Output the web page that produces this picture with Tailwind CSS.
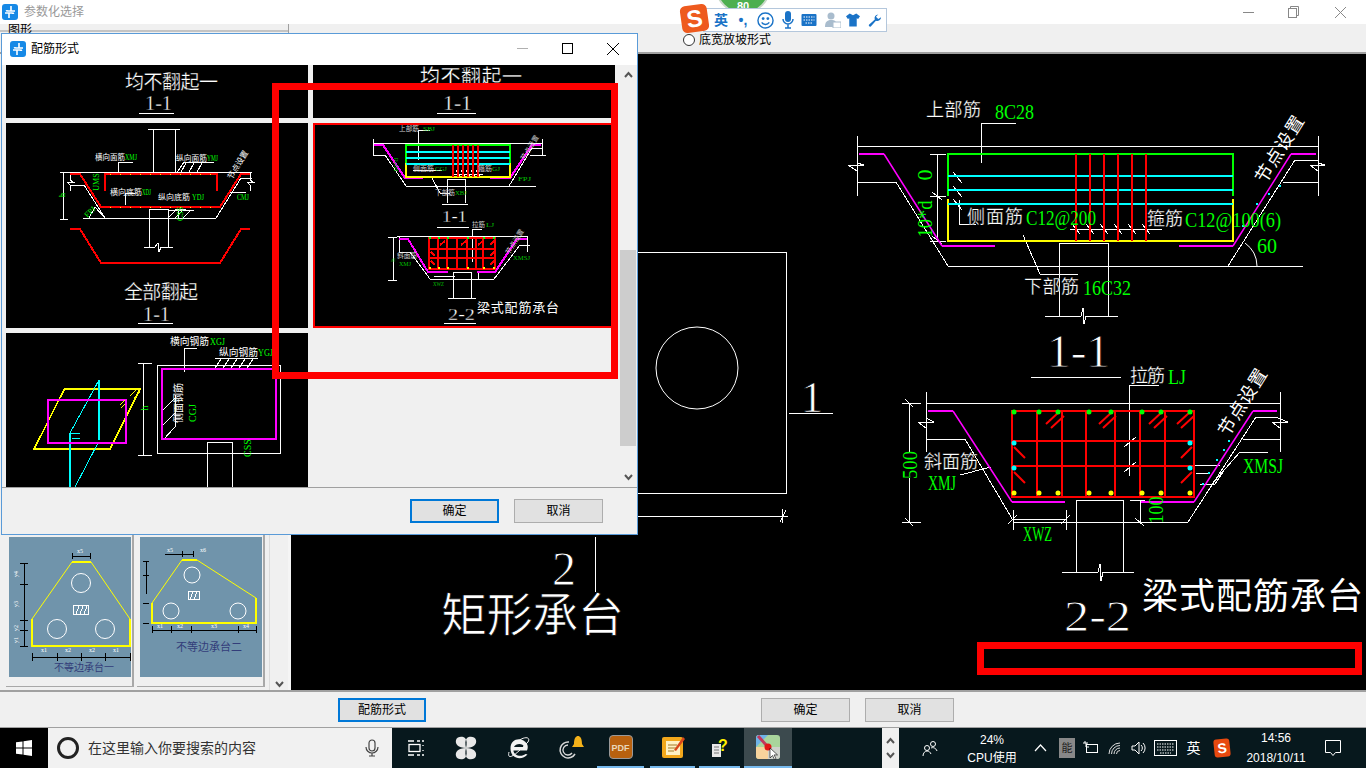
<!DOCTYPE html>
<html lang="zh">
<head>
<meta charset="utf-8">
<title>参数化选择</title>
<script src="https://cdn.jsdelivr.net/npm/@tailwindcss/browser@4"></script>
</head>
<body class="relative w-[1366px] h-[768px] overflow-hidden flex flex-col bg-[#f0f0f0] text-black text-xs [font-family:'Liberation_Sans','Noto_Sans_CJK_SC',sans-serif]">

<!-- main window title -->
<header class="h-6 bg-white flex items-center shrink-0">
  <svg class="ml-[2px] mr-[6px]" width="16" height="16" viewBox="0 0 16 16"><rect width="16" height="16" rx="3" fill="#1689e6"/><path d="M9 2v5h4M7 14V9H3M9 7H6a2 2 0 0 0-2 0M7 9h3a2 2 0 0 0 2 0" fill="none" stroke="#fff" stroke-width="1.6"/></svg>
  <span class="text-[#999999]">参数化选择</span>
  <div class="ml-auto flex items-center text-[#888888]">
    <span class="block w-[11px] h-px bg-[#888888]"></span>
    <svg class="ml-[34px]" width="11" height="12" viewBox="0 0 11 12" fill="none" stroke="#888"><rect x="0.5" y="2.5" width="8" height="9"/><path d="M2.5 2.5v-2h8v9h-2"/></svg>
    <svg class="ml-[36px] mr-[20px]" width="11" height="11" viewBox="0 0 11 11" stroke="#888"><path d="M0 0l11 11M11 0L0 11"/></svg>
  </div>
</header>

<!-- toolbar -->
<div class="h-[30px] shrink-0 flex border-b-2 border-[#a0a0a0] bg-[#f0f0f0]">
  <div class="w-[289px] h-full border-r border-[#a0a0a0]">
    <div class="h-[8px] border-b-2 border-[#c4c4c4] pl-2 leading-[13px]">图形</div>
  </div>
  <label class="ml-[394px] mt-[10px] flex items-center h-3 gap-1">
    <span class="block w-3 h-3 rounded-full border border-[#333333] bg-white"></span>
    <span class="text-xs">底宽放坡形式</span>
  </label>
</div>

<!-- main -->
<main class="flex-1 flex min-h-0">
  <aside class="w-[291px] shrink-0 flex items-end bg-[#f0f0f0] border-r-[3px] border-[#f5f5f5]">
    <div class="flex pl-[6px] pb-[3px] gap-[3px]">
      <div class="w-[128px] h-[200px] border-r-2 border-b border-[#a8a8a8] pl-[3px] pr-[1px] pb-[9px] flex items-end">
        <svg class="block" width="122" height="140" viewBox="9 537 122 140" shape-rendering="crispEdges">
          <rect x="9" y="537" width="122" height="140" fill="#7094ab"/>
          <path d="M32 619L72 562M91 562L130 619" fill="none" stroke="#ffff00" shape-rendering="auto"/>
          <path d="M72 562H91M130 619V646H32V619" fill="none" stroke="#ffff00" stroke-width="1.500"/>
          <g fill="none" stroke="#fff" shape-rendering="auto"><circle cx="81" cy="583" r="9.500"/><circle cx="57" cy="629" r="9.500"/><circle cx="105" cy="629" r="9.500"/></g>
          <g fill="none" stroke="#fff"><rect x="73.500" y="605.500" width="15" height="9"/><path d="M76 614l3-8M80 614l3-8M84 614l3-8"/></g>
          <path d="M32 657H130M32 653v8M57 653v8M81 653v8M105 653v8M130 653v8M72 556H90M72 553v6M90 553v6M24 563v83M20 563h8M20 584h8M20 620h8M20 630h8M20 646h8" stroke="#000" fill="none"/>
          <g fill="#fff" font-size="6" font-family="'Liberation Serif',serif" text-anchor="middle"><text x="44" y="652">x1</text><text x="68" y="652">x2</text><text x="92" y="652">x2</text><text x="116" y="652">x1</text><text x="80" y="553">x5</text></g>
          <g fill="#fff" font-size="6" font-family="'Liberation Serif',serif" text-anchor="middle"><text transform="translate(18 574) rotate(-90)">y4</text><text transform="translate(18 604) rotate(-90)">y3</text><text transform="translate(18 628) rotate(-90)">y2</text><text transform="translate(18 640) rotate(-90)">y1</text></g>
          <text x="84" y="671" text-anchor="middle" font-size="10" fill="#333d7a">不等边承台一</text>
        </svg>
      </div>
      <div class="w-[128px] h-[200px] border-r-2 border-b border-[#a8a8a8] pl-[3px] pr-[1px] pb-[9px] flex items-end">
        <svg class="block" width="122" height="140" viewBox="140 537 122 140" shape-rendering="crispEdges">
          <rect x="140" y="537" width="122" height="140" fill="#7094ab"/>
          <path d="M152 603L182 560M197 560L256 598" fill="none" stroke="#ffff00" shape-rendering="auto"/>
          <path d="M182 560H197M256 598V623H152V603" fill="none" stroke="#ffff00" stroke-width="1.500"/>
          <g fill="none" stroke="#fff" shape-rendering="auto"><circle cx="192" cy="575" r="8"/><circle cx="171" cy="611" r="8"/><circle cx="238" cy="611" r="8"/></g>
          <g fill="none" stroke="#fff"><rect x="188.500" y="591.500" width="11" height="8"/><path d="M190 599l3-7M194 599l3-7"/></g>
          <path d="M152 630H256M152 626v7M171 626v7M191 626v7M238 626v7M256 626v7M165 554H194M182 551v6M193 551v6M146 561v33M143 561h6M143 575h6M143 603h6M143 623h6" stroke="#000" fill="none"/>
          <g fill="#fff" font-size="6" font-family="'Liberation Serif',serif" text-anchor="middle"><text x="160" y="628">x1</text><text x="180" y="628">x2</text><text x="214" y="628">x3</text><text x="246" y="628">x4</text><text x="170" y="552">x5</text><text x="203" y="552">x6</text></g>
          <text x="209" y="651" text-anchor="middle" font-size="11" fill="#333d7a">不等边承台二</text>
        </svg>
      </div>
    </div>
    <div class="ml-auto w-[19px] h-full flex items-end justify-center pb-[2px] border-l border-[#dcdcdc]">
      <svg width="9" height="7" viewBox="0 0 9 7" fill="none" stroke="#555" stroke-width="2"><path d="M1 1l3.500 4 3.500-4"/></svg>
    </div>
  </aside>

  <div class="flex-1 bg-black min-w-0">
    <svg class="block" width="1075" height="636" viewBox="291 54 1075 636" shape-rendering="crispEdges" font-family="'Liberation Serif','Noto Sans CJK SC',serif">
      <!-- rectangular pile cap -->
      <g fill="none" stroke="#fff">
        <path d="M600 252H786V493H600M600 516H788M786 510l-6 12M782 509v14M595 537V592M789 413H833"/>
        <circle cx="697" cy="368" r="41" shape-rendering="auto"/>
      </g>
      <g fill="#fff" stroke="#000">
        <text x="812" y="397" text-anchor="middle" font-size="44" stroke-width=".7" dominant-baseline="central">1</text>
        <text x="564" y="568" text-anchor="middle" font-size="48" stroke-width=".8" dominant-baseline="central">2</text>
        <text x="441" y="615" font-size="46" textLength="183" stroke-width=".7" dominant-baseline="central">矩形承台</text>
      </g>

      <!-- section 1-1 -->
      <g fill="none" stroke="#fff">
        <path d="M857 146H1318M857 136V196M1318 136V196"/>
        <path d="M857 150V163L864 165H848L857 171V182H896L948 266H1303"/>
        <path d="M1318 150V160H1295L1228 266M1318 163L1325 165H1310L1318 171V182H1283"/>
        <path d="M981 163V123H1016M959 200V224H976M1023 235L1040 274H1078"/>
        <path d="M1059 316V243H1108V316M1045 316H1081L1083 308L1084 324L1086 316H1118"/>
        <path d="M937 154V241M930 154H946M930 196H946M930 241H946M932 192l10 8M932 236l10 8"/>
        <path d="M953 172l9 11M953 186l9 11M953 199l9 11"/>
        <path d="M1070 229H1162M1072 224l8 10M1086 224l8 10M1100 224l8 10M1114 224l8 10M1128 224l8 10M1142 224l8 10"/>
        <path d="M1257 266A29 29 0 0 0 1245 243" shape-rendering="auto"/>
        <path d="M1031 377H1121"/>
      </g>
      <path d="M859 154H884M942 246H995M1179 246H1233M1291 154H1316" fill="none" stroke="#ff00ff" stroke-width="2"/>
      <path d="M884 154L942 246M1233 246L1291 154" fill="none" stroke="#ff00ff" stroke-width="1.500" shape-rendering="auto"/>
      <path d="M948 196V154H1233V196" fill="none" stroke="#00ff00" stroke-width="2"/>
      <path d="M948 199V241H1233V199" fill="none" stroke="#ffff00" stroke-width="2"/>
      <path d="M948 176H1233M948 190H1233M948 204H1233" stroke="#00ffff" stroke-width="2"/>
      <path d="M1076 154V241M1090 154V241M1104 154V241M1118 154V241M1132 154V241M1146 154V241" stroke="#ff0000" stroke-width="2"/>
      <path d="M1242 225h2v2h-2zM1256 203h2v2h-2zM1268 193h2v2h-2zM1279 185h2v2h-2z" fill="#00ffff"/>
      <g fill="#fff" font-size="18">
        <text x="926" y="110" textLength="55" stroke="#000" stroke-width=".25" dominant-baseline="central">上部筋</text>
        <text x="967" y="217" textLength="56" stroke="#000" stroke-width=".25" dominant-baseline="central">侧面筋</text>
        <text x="1147" y="219" textLength="36" stroke="#000" stroke-width=".25" dominant-baseline="central">箍筋</text>
        <text x="1024" y="287" textLength="55" stroke="#000" stroke-width=".25" dominant-baseline="central">下部筋</text>
        <text transform="translate(1280 149) rotate(-58)" text-anchor="middle" dominant-baseline="central" letter-spacing="1">节点设置</text>
      </g>
      <g fill="#00ff00" font-size="22">
        <text x="995" y="111" textLength="39" lengthAdjust="spacingAndGlyphs" dominant-baseline="central">8C28</text>
        <text x="1026" y="217" textLength="70" lengthAdjust="spacingAndGlyphs" dominant-baseline="central">C12@200</text>
        <text x="1185" y="219" textLength="96" lengthAdjust="spacingAndGlyphs" dominant-baseline="central">C12@100(6)</text>
        <text x="1257" y="245" textLength="20" lengthAdjust="spacingAndGlyphs" dominant-baseline="central">60</text>
        <text x="1083" y="287" textLength="48" lengthAdjust="spacingAndGlyphs" dominant-baseline="central">16C32</text>
        <text transform="translate(924 175) rotate(-90)" text-anchor="middle" dominant-baseline="central">0</text>
        <text transform="translate(924 219) rotate(-90)" text-anchor="middle" textLength="37" lengthAdjust="spacingAndGlyphs" dominant-baseline="central">10*d</text>
      </g>
      <text x="1047" y="351" font-size="46" fill="#fff" stroke="#000" stroke-width=".8" textLength="63" lengthAdjust="spacingAndGlyphs" dominant-baseline="central">1-1</text>

      <!-- section 2-2 -->
      <g fill="none" stroke="#fff">
        <path d="M926 403H1280M926 392V452M1280 392V452"/>
        <path d="M926 403V418L934 422H918L926 428V439H965L1014 522H1188L1256 417H1276L1280 419M1243 439H1280M1280 419L1288 422H1272L1280 428"/>
        <path d="M1129 476V385H1159M1124 447l12-10M1124 472l12-10M960 475L991 467"/>
        <path d="M902 403H921M902 522H921M909 403V452M909 478V522M905 518l8 8M905 399l8 8"/>
        <path d="M1076 572V500H1123V572M1062 572H1098L1100 564L1101 581L1103 572H1134"/>
        <path d="M1012 519H1066M1013 510V530M1066 510V530M1008 524l9-9M1061 524l9-9"/>
        <path d="M1130 500H1145M1140 500V522M1135 518l9 8"/>
        <path d="M1203 484H1212L1240 452H1268M1196 473H1210M1188 465H1220M1215 484l8-12M1200 484H1215"/>
      </g>
      <path d="M928 411H953M1012 502H1065M1141 502H1194M1253 411H1277" fill="none" stroke="#ff00ff" stroke-width="2"/>
      <path d="M953 411L1012 502M1194 502L1253 411" fill="none" stroke="#ff00ff" stroke-width="1.500" shape-rendering="auto"/>
      <g stroke="#ff0000" fill="none" stroke-width="2">
        <rect x="1012" y="411" width="182" height="86"/>
        <path d="M1012 441H1194M1012 466H1194M1037 411V497M1062 411V497M1086 411V497M1115 411V497M1140 411V497M1165 411V497"/>
        <path shape-rendering="auto" d="M1046 424L1059 412M1051 428L1064 416M1099 424L1112 412M1103 428L1116 416M1149 424L1162 412M1154 428L1167 416M1177 424L1190 412M1181 428L1194 416M1014 447L1025 458M1014 472L1025 483M1192 447L1181 458M1192 472L1181 483"/>
      </g>
      <g fill="none" stroke-width="5" stroke-linecap="round" shape-rendering="auto">
        <path d="M1014 412h.01M1039 412h.01M1058 412h.01M1089 412h.01M1111 412h.01M1142 412h.01M1161 412h.01M1190 412h.01" stroke="#00ff00"/>
        <path d="M1014 493h.01M1039 493h.01M1058 493h.01M1089 493h.01M1111 493h.01M1142 493h.01M1161 493h.01M1190 493h.01" stroke="#ffff00"/>
        <path d="M1014 443h.01M1014 468h.01M1190 443h.01M1190 468h.01" stroke="#00ffff"/>
      </g>
      <path d="M1228 440h2v2h-2zM1223 449h2v2h-2zM1216 459h2v2h-2zM1208 472h2v2h-2zM1202 483h2v2h-2z" fill="#00ffff"/>
      <g fill="#fff" font-size="18">
        <text x="1130" y="376" textLength="35" stroke="#000" stroke-width=".25" dominant-baseline="central">拉筋</text>
        <text x="924" y="462" textLength="54" stroke="#000" stroke-width=".25" dominant-baseline="central">斜面筋</text>
        <text transform="translate(1243 402) rotate(-58)" text-anchor="middle" dominant-baseline="central" letter-spacing="1">节点设置</text>
      </g>
      <g fill="#00ff00" font-size="22">
        <text x="1168" y="376" textLength="18" lengthAdjust="spacingAndGlyphs" dominant-baseline="central">LJ</text>
        <text x="928" y="482" textLength="28" lengthAdjust="spacingAndGlyphs" dominant-baseline="central">XMJ</text>
        <text x="1243" y="465" textLength="40" lengthAdjust="spacingAndGlyphs" dominant-baseline="central">XMSJ</text>
        <text x="1023" y="533" textLength="29" lengthAdjust="spacingAndGlyphs" dominant-baseline="central">XWZ</text>
        <text transform="translate(909 465) rotate(-90)" text-anchor="middle" textLength="28" lengthAdjust="spacingAndGlyphs" dominant-baseline="central">500</text>
        <text transform="translate(1155 510) rotate(-90)" text-anchor="middle" textLength="27" lengthAdjust="spacingAndGlyphs" dominant-baseline="central">100</text>
      </g>
      <text x="1064" y="616" font-size="44" fill="#fff" stroke="#000" stroke-width=".8" textLength="67" lengthAdjust="spacingAndGlyphs" dominant-baseline="central">2-2</text>
      <text x="1142" y="597" font-size="36" fill="#fff" textLength="221" dominant-baseline="central">梁式配筋承台</text>
    </svg>
  </div>
</main>

<!-- bottom buttons -->
<footer class="h-[38px] shrink-0 border-t-2 border-b border-t-[#a0a0a0] border-b-[#a0a0a0] bg-[#f0f0f0] flex items-center pl-[338px]">
  <button class="w-[88px] h-6 border-2 border-[#0078d7] bg-[#e1e1e1] text-xs">配筋形式</button>
  <button class="ml-[335px] w-[89px] h-6 border border-[#adadad] bg-[#e1e1e1] text-xs">确定</button>
  <button class="ml-[15px] w-[89px] h-6 border border-[#adadad] bg-[#e1e1e1] text-xs">取消</button>
</footer>

<!-- taskbar -->
<nav class="h-10 shrink-0 flex bg-[#07181d] text-white text-xs">
  <div class="w-12 bg-black flex items-center justify-center">
    <svg width="16" height="16" viewBox="0 0 16 16" fill="#fff"><path d="M0 2.300L6.500 1.400V7.500H0ZM7.500 1.300L16 0V7.500H7.500ZM0 8.500H6.500V14.600L0 13.700ZM7.500 8.500H16V16L7.500 14.700Z"/></svg>
  </div>
  <div class="w-[344px] bg-[#f1f1f1] flex items-center text-[#333333] text-sm">
    <span class="ml-[9px] block w-[22px] h-[22px] rounded-full border-[3px] border-[#222222]"></span>
    <span class="ml-[9px]">在这里输入你要搜索的内容</span>
    <svg class="ml-auto mr-[13px]" width="14" height="18" viewBox="0 0 14 18" fill="none" stroke="#444" stroke-width="1.200"><rect x="4" y="1" width="6" height="11" rx="3"/><path d="M1 8a6 6 0 0 0 12 0M7 14v3M4 17h6"/></svg>
  </div>
  <div class="w-12 flex items-center justify-center">
    <svg width="16" height="16" viewBox="0 0 16 16" fill="none" stroke="#fff" stroke-width="1.300"><path d="M0 1h6M0 15h6M9 1h3M9 15h3M14 1h2M14 15h2"/><rect x="1" y="4.500" width="11" height="7"/><path d="M15 5v1M15 10v1" /></svg>
  </div>
  <div class="w-[52px] flex items-center justify-center">
    <svg width="22" height="24" viewBox="0 0 22 24" fill="#e8e8e8"><path d="M11 12C3 12 0 8 1 4S8 0 10 2s2 6 1 10ZM11 12c8 0 11-4 10-8S14 0 12 2s-2 6-1 10ZM11 12c-8 0-11 4-10 8s7 4 9 2 2-6 1-10ZM11 12c8 0 11 4 10 8s-7 4-9 2-2-6-1-10Z"/></svg>
  </div>
  <div class="w-[53px] flex items-center justify-center">
    <svg width="24" height="24" viewBox="0 0 24 24" fill="none"><path d="M20 14.500H6.500c0 5 8 7 12 3.500l2 .5c-5 6-17 5-17-6S16 1 20 8c1 2 1 4 0 6.500ZM7 11h10c-.5-4-8.500-4-10 0Z" fill="#f2f2f2"/><path d="M2 16C0 24 6 22 21 6c3-5-3-6-10-1" stroke="#f2f2f2"/></svg>
  </div>
  <div class="w-[52px] flex items-center justify-center">
    <svg width="28" height="24" viewBox="0 0 28 24" fill="none"><path d="M12 6a8 8 0 1 0 6 12" stroke="#d8d8d8" stroke-width="1.500"/><path d="M11 9a5 5 0 1 0 4 8" stroke="#d8d8d8" stroke-width="1.300"/><path d="M17 8c0-6 2-8 4-8s4 2 4 8l2 3H15Z" fill="#f5b21a"/></svg>
  </div>
  <div class="w-[47px] flex items-center justify-center border-b-2 border-[#76b9ed]">
    <span class="block w-6 h-6 rounded-sm bg-[#b8610f] border border-[#999999] text-[#e9d7b8] text-[9px] font-bold text-center leading-6">PDF</span>
  </div>
  <div class="ml-[6px] w-[45px] flex items-center justify-center border-b-2 border-[#76b9ed]">
    <svg width="24" height="24" viewBox="0 0 24 24"><rect x="1" y="2" width="21" height="21" rx="2" fill="#f2a81c"/><rect x="5" y="6" width="14" height="14" fill="#fff2c4"/><path d="M7 10h9M7 13h9M7 16h6" stroke="#a37a2a"/><path d="M13 15L22 2l2 2-9 12Z" fill="#d9471b"/></svg>
  </div>
  <div class="ml-[4px] w-[41px] flex items-center justify-center border-b-2 border-[#76b9ed]">
    <svg width="18" height="24" viewBox="0 0 18 24"><rect x="1" y="9" width="9" height="13" fill="#e8e8e8"/><path d="M3 12h5M3 15h5M3 18h5" stroke="#777"/><text x="7" y="16" font-size="16" font-weight="700" fill="#ffee00" font-family="'Liberation Sans',sans-serif">?</text></svg>
  </div>
  <div class="ml-[4px] w-12 flex items-center justify-center bg-[#3c4a4e] border-b-2 border-[#76b9ed]">
    <svg width="24" height="26" viewBox="0 0 24 26"><rect y="1" width="24" height="24" rx="3" fill="#a9d59c"/><path d="M0 13V4a3 3 0 0 1 3-3h9Z" fill="#6fb4e8"/><path d="M0 13h12V25H3a3 3 0 0 1-3-3Z" fill="#f7d39c"/><path d="M12 13h12v9a3 3 0 0 1-3 3h-9Z" fill="#cfd2cc"/><path d="M2 2l10 11" stroke="#c2385c" stroke-width="3"/><circle cx="12" cy="13" r="3.500" fill="#e01616"/><path d="M14 14v10l2.500-2.500 2 4 1.500-.8-2-3.800h3.500Z" fill="#fff" stroke="#000" stroke-width=".6"/></svg>
  </div>
  <div class="ml-[90px] w-[17px] bg-[#f0f0f0] flex flex-col items-center justify-around py-[5px]">
    <svg width="9" height="7" viewBox="0 0 9 7" fill="none" stroke="#555" stroke-width="2"><path d="M1 6l3.500-4 3.500 4"/></svg>
    <svg width="9" height="7" viewBox="0 0 9 7" fill="none" stroke="#555" stroke-width="2"><path d="M1 1l3.500 4 3.500-4"/></svg>
  </div>
  <div class="w-[61px] flex items-center justify-center">
    <svg width="16" height="16" viewBox="0 0 16 16" fill="none" stroke="#fff"><circle cx="5" cy="8" r="2.500"/><path d="M1 16c0-3 2-5 4-5s3 1 4 3"/><circle cx="11" cy="4" r="2.500"/><path d="M9 8c2-1 5 0 6 3"/></svg>
  </div>
  <div class="w-16 flex flex-col items-center justify-center leading-[18px] pt-[1px]">
    <span>24%</span><span>CPU使用</span>
  </div>
  <div class="w-8 flex items-center justify-center">
    <svg width="13" height="8" viewBox="0 0 13 8" fill="none" stroke="#fff" stroke-width="1.200"><path d="M1 7l5.500-6 5.500 6"/></svg>
  </div>
  <div class="w-[22px] flex items-center justify-center">
    <span class="block w-4 h-5 bg-[#888888] text-[#222222] text-[11px] text-center leading-5">能</span>
  </div>
  <div class="w-[25px] flex items-center justify-center">
    <svg width="15" height="14" viewBox="0 0 15 14" fill="none" stroke="#fff"><rect x="3.500" y="3.500" width="11" height="8"/><path d="M0 2h5M2 0v2M3 2v4M4 6h2" /></svg>
  </div>
  <div class="w-6 flex items-center justify-center">
    <svg width="14" height="13" viewBox="0 0 14 13" fill="none" stroke="#ddd"><path d="M1 12A11 11 0 0 1 12 1M3.500 12A8.500 8.500 0 0 1 12 3.500M6 12A6 6 0 0 1 12 6M8.500 12A3.500 3.500 0 0 1 12 8.500"/></svg>
  </div>
  <div class="w-[22px] flex items-center justify-center">
    <svg width="15" height="14" viewBox="0 0 15 14" fill="none" stroke="#fff"><path d="M1 5h3l4-4v12l-4-4H1Z"/><path d="M10 4a4 4 0 0 1 0 6M12 2a7 7 0 0 1 0 10"/></svg>
  </div>
  <div class="w-8 flex items-center justify-center">
    <svg width="23" height="16" viewBox="0 0 23 16" fill="none" stroke="#fff"><rect x=".5" y=".5" width="22" height="15"/><path d="M3 4h17M3 7h17M3 10h17M6 13h11" stroke-dasharray="1.500 1"/></svg>
  </div>
  <div class="w-[25px] flex items-center justify-center text-sm">英</div>
  <div class="w-8 flex items-center justify-center">
    <span class="block w-4 h-[18px] bg-[#e8490f] rounded-[3px] rotate-[-6deg] text-white font-bold text-sm text-center leading-[18px]">S</span>
  </div>
  <div class="w-[76px] flex flex-col items-center justify-center leading-[20px]">
    <span>14:56</span><span>2018/10/11</span>
  </div>
  <div class="w-[38px] flex items-center justify-center">
    <svg width="16" height="17" viewBox="0 0 16 17" fill="none" stroke="#fff"><path d="M.5.500h15v12h-5l-2.500 3-2.500-3h-5Z"/></svg>
  </div>
</nav>

<!-- dialog window -->
<section class="absolute left-[1px] top-[33px] w-[637px] h-[502px] border border-[#5a9bd8] bg-[#f0f0f0] flex flex-col">
  <div class="h-[31px] shrink-0 bg-white flex items-center pb-[2px]">
    <svg class="ml-2 mr-[5px]" width="16" height="16" viewBox="0 0 16 16"><rect width="16" height="16" rx="3" fill="#1689e6"/><path d="M9 2v5h4M7 14V9H3M9 7H6a2 2 0 0 0-2 0M7 9h3a2 2 0 0 0 2 0" fill="none" stroke="#fff" stroke-width="1.600"/></svg>
    <span>配筋形式</span>
    <span class="ml-[438px] block w-[11px] h-px bg-[#b0b0b0]"></span>
    <span class="ml-[34px] block w-[11px] h-[11px] border border-black"></span>
    <svg class="ml-[34px]" width="12" height="12" viewBox="0 0 12 12" stroke="#000"><path d="M0 0l12 12M12 0L0 12"/></svg>
  </div>
  <div class="h-[422px] shrink-0 flex pl-1">
    <div class="grid grid-cols-[302px_302px] grid-rows-[53px_205px_154px] gap-[5px] overflow-hidden">
      <div class="bg-black overflow-hidden">
        <svg class="block" width="302" height="53" viewBox="6 65 302 53" font-family="'Liberation Serif','Noto Sans CJK SC',serif" shape-rendering="crispEdges">
          <text x="125" y="82" font-size="19" fill="#fff" stroke="#000" stroke-width=".25" textLength="93" dominant-baseline="central">均不翻起一</text>
          <text x="145" y="102" font-size="22" fill="#fff" stroke="#000" stroke-width=".4" textLength="27" lengthAdjust="spacingAndGlyphs" dominant-baseline="central">1-1</text>
          <path d="M139 113H174" stroke="#fff"/>
        </svg>
      </div>
      <div class="bg-black overflow-hidden">
        <svg class="block" width="302" height="53" viewBox="313 65 302 53" font-family="'Liberation Serif','Noto Sans CJK SC',serif" shape-rendering="crispEdges">
          <text x="420" y="77" font-size="20" fill="#fff" stroke="#000" stroke-width=".25" textLength="102" dominant-baseline="central">均不翻起一</text>
          <text x="443" y="102" font-size="22" fill="#fff" stroke="#000" stroke-width=".4" textLength="29" lengthAdjust="spacingAndGlyphs" dominant-baseline="central">1-1</text>
          <path d="M437 113H476" stroke="#fff"/>
        </svg>
      </div>

      <div class="bg-black overflow-hidden">
        <svg class="block" width="302" height="205" viewBox="6 123 302 205" font-family="'Liberation Serif','Noto Sans CJK SC',serif" shape-rendering="crispEdges">
          <g fill="none" stroke="#fff">
            <path d="M68 172H252M63 172V219M60 172h8M60 219h8"/>
            <path d="M70 185H84L105 218M83 218H216L241 178H252M70 172v8l3 2h-6l3 3v6M250 172v8l3 2h-6l3 3v6M228 192H246"/>
            <path d="M153 172V129H175V172M148 129H180M149 247V209H168V247M144 247H155L158 243L159 252L161 247H173"/>
            <path d="M118 174V162H133M125 205V193H135M176 174L184 162H214M180 174l6-11M188 174l6-11M196 174l6-11M168 218l8-8M175 218l8-8M183 218l8-8M168 210H194M178 209V219M175 209H186"/>
            <path d="M89 218l6-11l10 11"/>
            <path d="M138 323H173"/>
          </g>
          <g fill="none" stroke="#ff0000" stroke-width="2">
            <path d="M70 174H80L101 207H220L241 174H250"/>
            <path d="M105 191V174H217V191"/>
            <path d="M70 229H80L101 263H220L241 229H250"/>
          </g>
          <path d="M110 174h1v1h-1zM120 174h1v1h-1zM130 174h1v1h-1zM140 174h1v1h-1zM150 174h1v1h-1zM160 174h1v1h-1zM170 174h1v1h-1zM180 174h1v1h-1zM190 174h1v1h-1zM200 174h1v1h-1zM210 174h1v1h-1zM110 207h1v1h-1zM120 207h1v1h-1zM130 207h1v1h-1zM140 207h1v1h-1zM150 207h1v1h-1zM160 207h1v1h-1zM170 207h1v1h-1zM180 207h1v1h-1zM190 207h1v1h-1zM200 207h1v1h-1zM210 207h1v1h-1z" fill="#ffff00"/>
          <g fill="#fff" font-size="8">
            <text x="95" y="157" textLength="30" lengthAdjust="spacingAndGlyphs" dominant-baseline="central">横向面筋</text>
            <text x="176" y="158" textLength="31" lengthAdjust="spacingAndGlyphs" dominant-baseline="central">纵向面筋</text>
            <text x="110" y="192" textLength="32" lengthAdjust="spacingAndGlyphs" dominant-baseline="central">横向底筋</text>
            <text x="158" y="197" textLength="32" lengthAdjust="spacingAndGlyphs" dominant-baseline="central">纵向底筋</text>
            <text transform="translate(238 165) rotate(-58)" text-anchor="middle" dominant-baseline="central">节点设置</text>
          </g>
          <g fill="#00ff00" font-size="8">
            <text x="125" y="157" textLength="12" lengthAdjust="spacingAndGlyphs" dominant-baseline="central">XMJ</text>
            <text x="207" y="158" textLength="11" lengthAdjust="spacingAndGlyphs" dominant-baseline="central">YMJ</text>
            <text x="142" y="192" textLength="9" lengthAdjust="spacingAndGlyphs" dominant-baseline="central">XDJ</text>
            <text x="192" y="197" textLength="12" lengthAdjust="spacingAndGlyphs" dominant-baseline="central">YDJ</text>
            <text x="237" y="197" textLength="12" lengthAdjust="spacingAndGlyphs" dominant-baseline="central">CMJ</text>
            <text transform="translate(96 182) rotate(-90)" text-anchor="middle" dominant-baseline="central">UMS</text>
            <text transform="translate(90 212) rotate(-45)" text-anchor="middle" dominant-baseline="central">FPJ</text>
            <text transform="translate(180 214) rotate(-90)" text-anchor="middle" dominant-baseline="central">CSS</text>
            <text transform="translate(62 195) rotate(-90)" text-anchor="middle" dominant-baseline="central">h</text>
          </g>
          <text x="124" y="292" font-size="19" fill="#fff" stroke="#000" stroke-width=".25" textLength="74" dominant-baseline="central">全部翻起</text>
          <text x="143" y="313" font-size="22" fill="#fff" stroke="#000" stroke-width=".4" textLength="27" lengthAdjust="spacingAndGlyphs" dominant-baseline="central">1-1</text>
        </svg>
      </div>
      <div class="bg-black overflow-hidden border-2 border-[#ff0000]">
        <svg class="block -m-[2px]" width="302" height="205" viewBox="313 123 302 205" font-family="'Liberation Serif','Noto Sans CJK SC',serif" shape-rendering="crispEdges">
          <g fill="none" stroke="#fff">
            <path d="M373 143H542M373 139V155M542 139V155M373 155H385L406 186H536M509 186L532 148H542M530 155H546"/>
            <path d="M418 160V130H430M413 170H442M432 178l8 15H450M447 203V179H465V203M442 204H468"/>
            <path d="M453 174H483M456 170l4 6M461 170l4 6M466 170l4 6M471 170l4 6M476 170l4 6"/>
            <path d="M437 227H469"/>
            <path d="M397 236H527M399 236V252M527 236V252M393 237V280M388 237h9M388 280h9"/>
            <path d="M399 252H410L430 279H494L520 245H530M472 262V229H482M453 298V272H471V298M448 298H476M434 276H455M478 272V279"/>
            <path d="M444 323H476"/>
          </g>
          <g fill="none" stroke="#ff00ff" stroke-width="2">
            <path d="M374 145H383L405 178H423M490 178H510L532 145H541"/>
            <path d="M399 239H408L428 272H448M477 272H495L517 239H527"/>
          </g>
          <path d="M406 163V145H510V163" fill="none" stroke="#00ff00" stroke-width="2"/>
          <path d="M406 163V177H510V163" fill="none" stroke="#ffff00" stroke-width="2"/>
          <path d="M406 152H510M406 158H510M406 164H510" stroke="#00ffff" stroke-width="2"/>
          <path d="M453 145V177M458 145V177M463 145V177M468 145V177M473 145V177M478 145V177" stroke="#ff0000" stroke-width="2"/>
          <g fill="none" stroke="#ff0000" stroke-width="2">
            <rect x="429" y="238" width="66" height="31"/>
            <path d="M429 249H495M429 258H495M438 238V269M447 238V269M457 238V269M467 238V269M476 238V269M483 238V269"/>
            <path d="M440 245l5-4M461 245l5-4M478 245l5-4M490 245l4-4M431 252l4 4M431 261l4 4M494 252l-4 4M494 261l-4 4"/>
          </g>
          <path d="M429 237h2v2h-2zM438 237h2v2h-2zM447 237h2v2h-2zM467 237h2v2h-2zM483 237h2v2h-2zM493 237h2v2h-2z" fill="#00ff00"/>
          <path d="M429 267h2v2h-2zM438 267h2v2h-2zM447 267h2v2h-2zM467 267h2v2h-2zM483 267h2v2h-2zM493 267h2v2h-2z" fill="#ffff00"/>
          <g fill="#d0d0d0" font-size="7">
            <text x="399" y="129" textLength="20" lengthAdjust="spacingAndGlyphs" dominant-baseline="central">上部筋</text>
            <text x="413" y="169" textLength="21" lengthAdjust="spacingAndGlyphs" dominant-baseline="central">侧面筋</text>
            <text x="478" y="169" textLength="14" lengthAdjust="spacingAndGlyphs" dominant-baseline="central">箍筋</text>
            <text x="435" y="193" textLength="20" lengthAdjust="spacingAndGlyphs" dominant-baseline="central">下部筋</text>
            <text x="472" y="225" textLength="13" lengthAdjust="spacingAndGlyphs" dominant-baseline="central">拉筋</text>
            <text x="397" y="256" textLength="20" lengthAdjust="spacingAndGlyphs" dominant-baseline="central">斜面筋</text>
            <text transform="translate(530 148) rotate(-58)" text-anchor="middle" dominant-baseline="central">节点设置</text>
            <text transform="translate(515 242) rotate(-58)" text-anchor="middle" dominant-baseline="central">节点设置</text>
          </g>
          <g fill="#00c000" font-size="7">
            <text x="423" y="129" textLength="12" lengthAdjust="spacingAndGlyphs" dominant-baseline="central">SBJ</text>
            <text x="435" y="169" textLength="12" lengthAdjust="spacingAndGlyphs" dominant-baseline="central">CGJ</text>
            <text x="492" y="169" textLength="8" lengthAdjust="spacingAndGlyphs" dominant-baseline="central">GJ</text>
            <text x="455" y="193" textLength="12" lengthAdjust="spacingAndGlyphs" dominant-baseline="central">XBJ</text>
            <text x="518" y="179" textLength="13" lengthAdjust="spacingAndGlyphs" dominant-baseline="central">FPJ</text>
            <text x="486" y="225" textLength="8" lengthAdjust="spacingAndGlyphs" dominant-baseline="central">LJ</text>
            <text x="399" y="264" textLength="12" lengthAdjust="spacingAndGlyphs" dominant-baseline="central">XMJ</text>
            <text x="513" y="258" textLength="17" lengthAdjust="spacingAndGlyphs" dominant-baseline="central">XMSJ</text>
            <text x="433" y="284" textLength="11" lengthAdjust="spacingAndGlyphs" dominant-baseline="central">XWZ</text>
            <text transform="translate(396 165) rotate(-90)" text-anchor="middle" dominant-baseline="central">10*d</text>
            <text transform="translate(393 260) rotate(-90)" text-anchor="middle" dominant-baseline="central">h</text>
          </g>
          <text x="442" y="216" font-size="16" fill="#fff" stroke="#000" stroke-width=".3" textLength="25" lengthAdjust="spacingAndGlyphs" dominant-baseline="central">1-1</text>
          <text x="448" y="314" font-size="16" fill="#fff" stroke="#000" stroke-width=".3" textLength="27" lengthAdjust="spacingAndGlyphs" dominant-baseline="central">2-2</text>
          <text x="477" y="307" font-size="13" fill="#fff" textLength="82" dominant-baseline="central">梁式配筋承台</text>
        </svg>
      </div>

      <div class="bg-black overflow-hidden">
        <svg class="block" width="302" height="154" viewBox="6 333 302 154" font-family="'Liberation Serif','Noto Sans CJK SC',serif" shape-rendering="crispEdges">
          <path d="M64.500 389H140L110 449H34Z" fill="none" stroke="#ffff00" stroke-width="1.500"/>
          <path d="M99 380V440M70 433V487" stroke="#00ffff" stroke-width="2"/>
          <path d="M99 380L70 433M98 443L75 487" stroke="#00ffff" fill="none"/>
          <path d="M70 433H80M72 438H80" stroke="#00ffff"/>
          <rect x="48" y="400" width="78" height="43" fill="none" stroke="#ff00ff" stroke-width="2"/>
          <path d="M130 396l8-8M134 398l6-6M120 405l5-5M121 408l4-4" stroke="#ffff00"/>
          <g fill="none" stroke="#fff">
            <rect x="157.500" y="365.500" width="122.500" height="88"/>
            <path d="M143.500 363V455M138 363H152M138 455H152M184 372V348H197M215 368l6-9M223 368l6-9M231 368l6-9M239 368l6-9M247 368l6-9M215 358H258M175 427l-12 13M175 413l-12 12M175 398l-12 12M175 395V427"/>
            <path d="M207 487V442H232.500V487"/>
          </g>
          <rect x="162" y="369" width="114" height="70" fill="none" stroke="#ff00ff" stroke-width="2"/>
          <g fill="#fff" font-size="10">
            <text x="170" y="341" textLength="39" lengthAdjust="spacingAndGlyphs" dominant-baseline="central">横向钢筋</text>
            <text x="219" y="352" textLength="39" lengthAdjust="spacingAndGlyphs" dominant-baseline="central">纵向钢筋</text>
            <text transform="translate(178 403) rotate(-90)" text-anchor="middle" dominant-baseline="central">侧面钢筋</text>
          </g>
          <g fill="#00ff00" font-size="10">
            <text x="210" y="341" textLength="15" lengthAdjust="spacingAndGlyphs" dominant-baseline="central">XGJ</text>
            <text x="258" y="352" textLength="15" lengthAdjust="spacingAndGlyphs" dominant-baseline="central">YGJ</text>
            <text transform="translate(192 413) rotate(-90)" text-anchor="middle" dominant-baseline="central">CGJ</text>
            <text transform="translate(247 448) rotate(-90)" text-anchor="middle" dominant-baseline="central">CSS</text>
            <text transform="translate(144 408) rotate(-90)" text-anchor="middle" dominant-baseline="central">h</text>
          </g>
        </svg>
      </div>
      <div></div>
    </div>
    <div class="ml-[5px] w-4 flex flex-col">
      <div class="h-[185px] flex justify-center pt-[6px]">
        <svg width="9" height="7" viewBox="0 0 9 7" fill="none" stroke="#555" stroke-width="2"><path d="M1 6l3.500-4 3.500 4"/></svg>
      </div>
      <div class="h-[196px] bg-[#cdcdcd]"></div>
      <div class="flex-1 flex justify-center items-end pb-[6px]">
        <svg width="9" height="7" viewBox="0 0 9 7" fill="none" stroke="#555" stroke-width="2"><path d="M1 1l3.500 4 3.500-4"/></svg>
      </div>
    </div>
  </div>
  <div class="flex-1 border-t border-[#a0a0a0] flex items-start pt-[11px] pl-[408px] gap-[15px]">
    <button class="w-[89px] h-6 border-2 border-[#0078d7] bg-[#e1e1e1] text-xs">确定</button>
    <button class="w-[89px] h-6 border border-[#adadad] bg-[#e1e1e1] text-xs">取消</button>
  </div>
</section>

<!-- red annotation boxes over the shot -->
<div class="absolute left-[272px] top-[83px] w-[346px] h-[296px] border-[7px] border-[#ff0000]"></div>
<div class="absolute left-[977px] top-[642px] w-[385px] h-[33px] border-[7px] border-[#ff0000]"></div>

<!-- floating badge and IME bar -->
<div class="absolute left-[715px] -top-[42px] w-[56px] h-[56px] rounded-full bg-[#4caf50] border-2 border-[#c8d8c8] flex items-end justify-center text-white font-bold text-[11px] leading-[11px]">80</div>
<div class="absolute left-[703px] top-[8px] w-[184px] h-[24px] bg-white border border-[#b4c7dc] flex items-center text-[#1a73c7]">
  <span class="ml-[10px] w-[14px] text-center text-sm font-bold">英</span>
  <span class="ml-[8px] w-[14px] text-center text-sm font-bold leading-[10px]">•,</span>
  <svg class="ml-[7px]" width="17" height="17" viewBox="0 0 18 18" fill="none" stroke="#1a73c7" stroke-width="1.500"><circle cx="9" cy="9" r="8"/><circle cx="6.500" cy="7" r=".8" fill="#1a73c7"/><circle cx="11.500" cy="7" r=".8" fill="#1a73c7"/><path d="M5 11c2 3 6 3 8 0"/></svg>
  <svg class="ml-[8px]" width="12" height="18" viewBox="0 0 12 18" fill="#1a73c7"><rect x="3" width="6" height="11" rx="3"/><path d="M1 8a5 5 0 0 0 10 0M6 13v4M3 17h6" fill="none" stroke="#1a73c7" stroke-width="1.500"/></svg>
  <svg class="ml-[7px]" width="16" height="12" viewBox="0 0 15 12"><rect width="15" height="12" rx="1" fill="#1a73c7"/><path d="M2 3h11M2 6h11M4 9h7" stroke="#fff" stroke-dasharray="1.500 1"/></svg>
  <svg class="ml-[8px]" width="16" height="16" viewBox="0 0 16 16" fill="#a9bccd"><circle cx="6" cy="4" r="3.500"/><path d="M0 15c0-5 2-7 6-7s4 1 5 2H8v5Z"/><rect x="8" y="10" width="8" height="6" fill="#fff" stroke="#a9bccd"/></svg>
  <svg class="ml-[5px]" width="14" height="14" viewBox="0 0 15 14" fill="#1a73c7"><path d="M4 0l3.500 2L11 0l4 3-2 3-1.500-1v9h-8V5L2 6 0 3Z"/></svg>
  <svg class="ml-[8px]" width="14" height="15" viewBox="0 0 15 15" fill="#1a73c7"><path d="M14 4a4 4 0 0 1-5.500 3.700L3 14a1.500 1.500 0 0 1-2-2l6.300-5.500A4 4 0 0 1 11 1L8.500 3.500 11 6Z"/></svg>
</div>
<span class="absolute left-[681px] top-[5px] w-[27px] h-[27px] rounded-[5px] rotate-[-8deg] bg-[#ee5a1e] text-white font-bold text-[24px] leading-[27px] text-center">S</span>

</body>
</html>
